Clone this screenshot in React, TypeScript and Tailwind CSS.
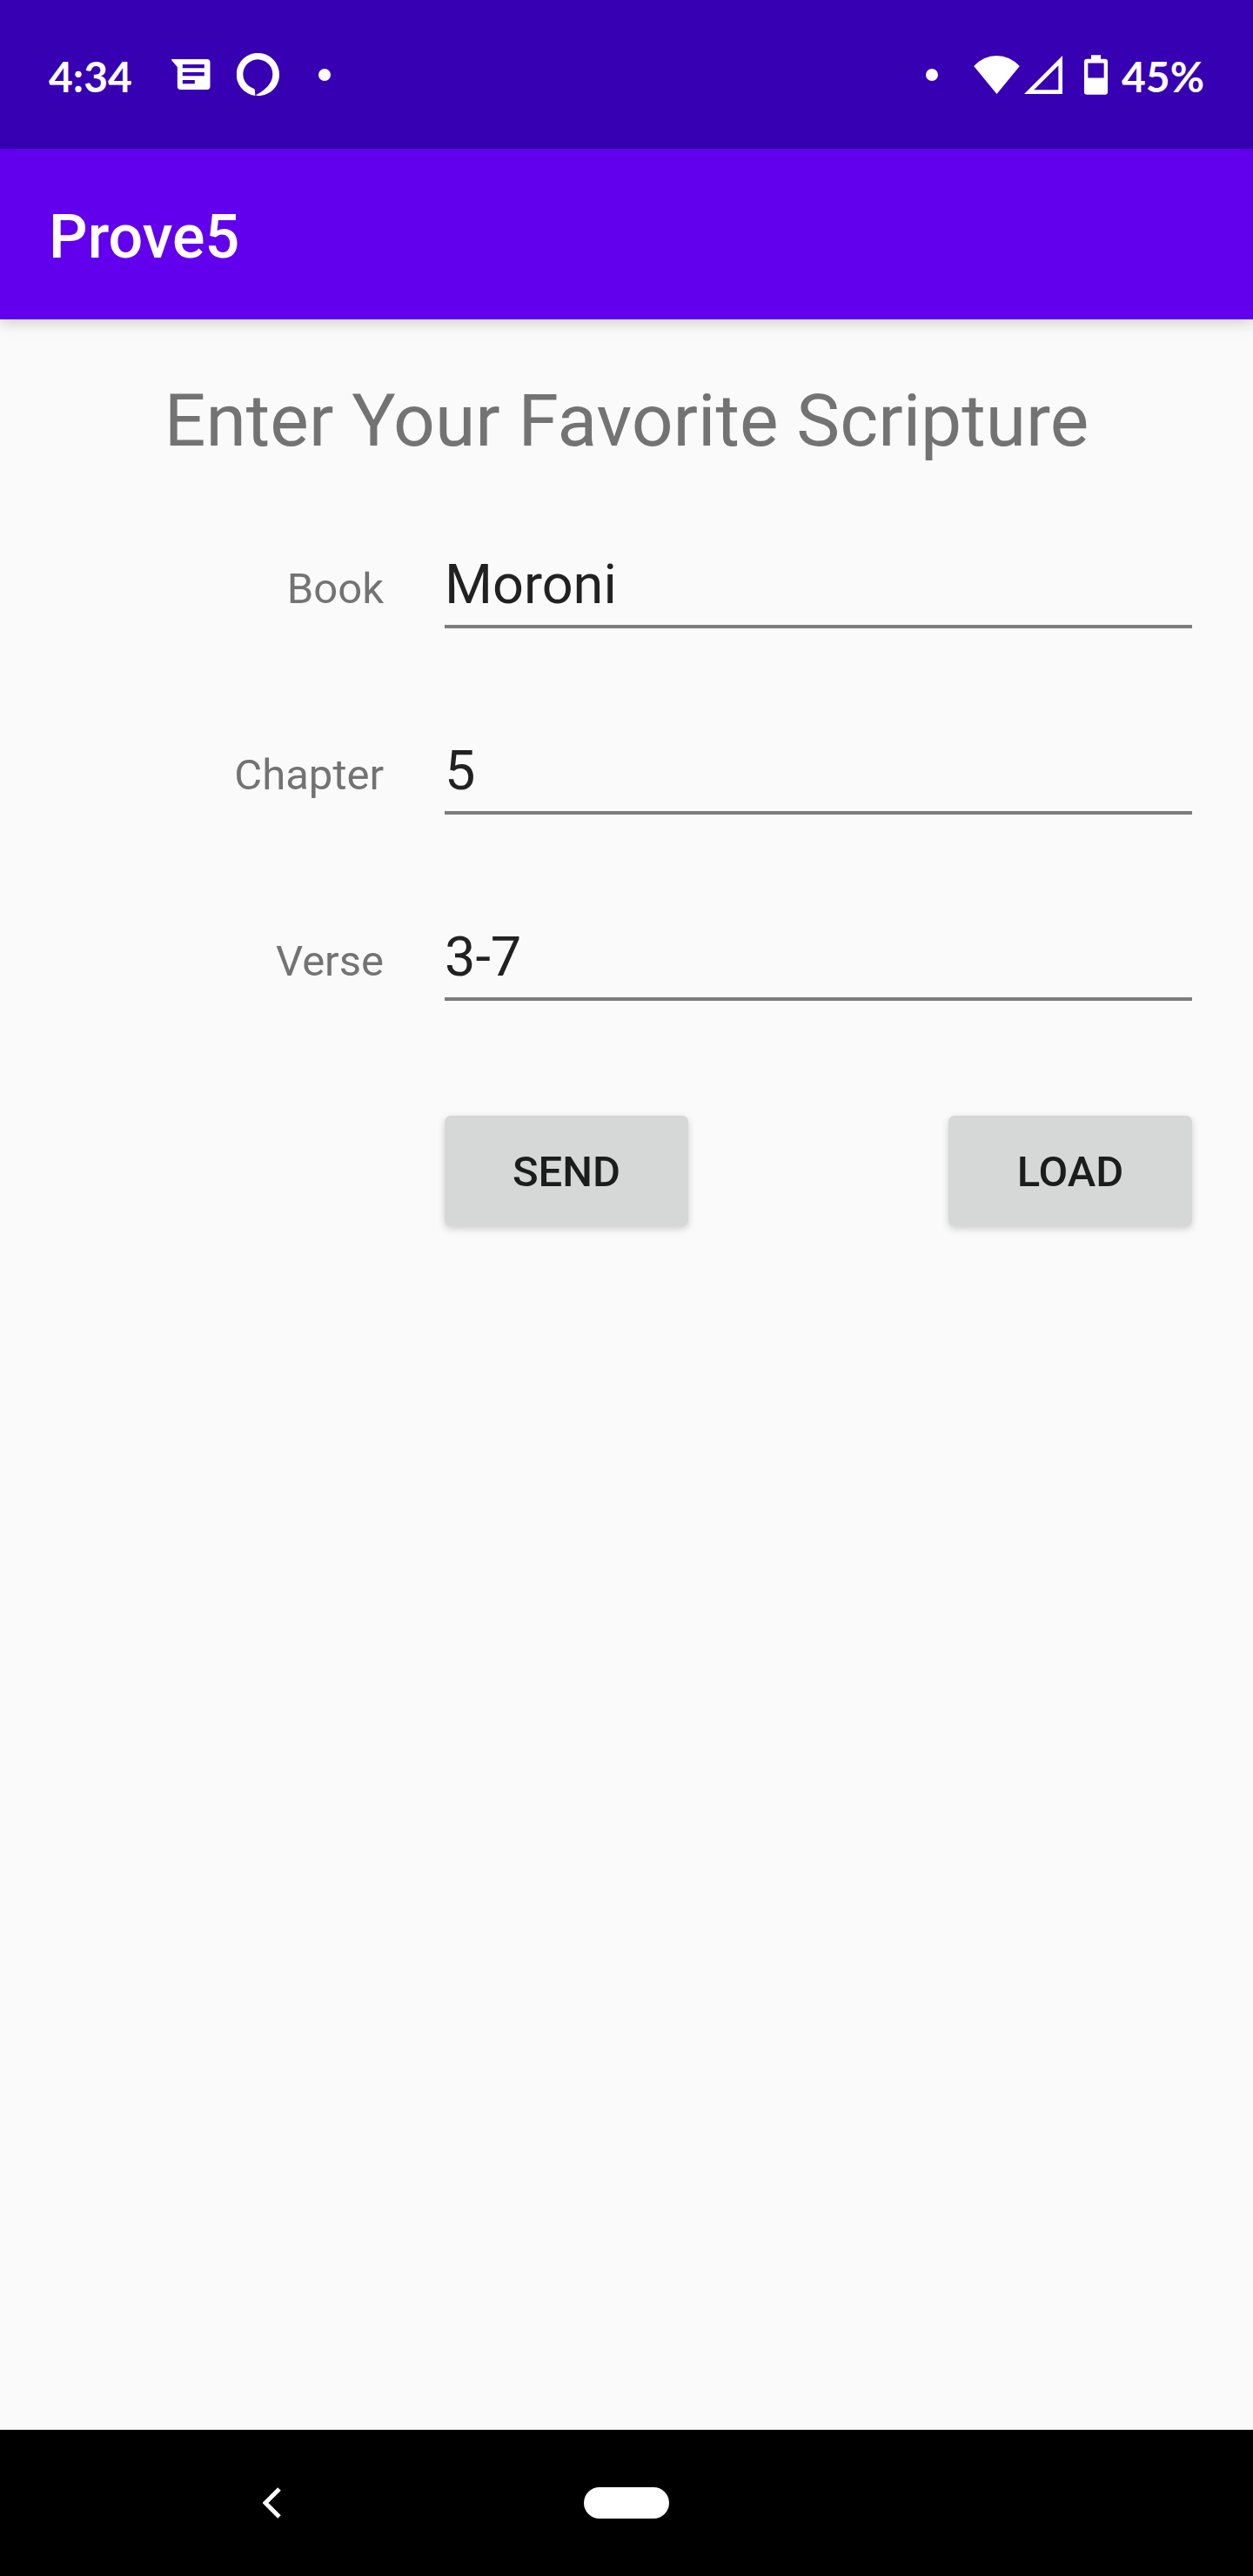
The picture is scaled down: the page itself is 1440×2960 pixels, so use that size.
import { useState } from "react";

const fieldList = [
  { id: "book", label: "Book", initial: "Moroni" },
  { id: "chapter", label: "Chapter", initial: "5" },
  { id: "verse", label: "Verse", initial: "3-7" },
];

function MessageIcon() {
  return (
    <svg viewBox="472 84 134 105" className="h-[35px] w-[45px]" fill="currentColor" aria-hidden="true">
      <path
        fillRule="evenodd"
        d="M472 84H594Q605 84 605 95V178Q605 189 594 189H503Q492 189 492 178V111L474 90Q471 86 472 84ZM510 102V115H585V102ZM510 129V142H585V129ZM510 156V169H552V156Z"
      />
    </svg>
  );
}

function AssistantIcon() {
  return (
    <svg viewBox="696 63 147 147" className="size-[49px]" fill="currentColor" aria-hidden="true">
      <path d="M760 210A74 74 0 1 1 843 137C843 176 813 210 769 210L761 208C792 193 820 169 820 136A51 51 0 1 0 752 184Q759 186 759 193Z" />
    </svg>
  );
}

function WifiIcon() {
  return (
    <svg viewBox="231 69 159 133" className="h-11 w-[53px]" fill="currentColor" aria-hidden="true">
      <path d="M231 105Q265 69 310 69T390 105L310.500 202Z" />
    </svg>
  );
}

function SignalIcon() {
  return (
    <svg viewBox="404 70 133 133" className="size-11" fill="currentColor" aria-hidden="true">
      <path fillRule="evenodd" d="M404 203L537 70V203ZM438 189H523V104Z" />
    </svg>
  );
}

function BatteryIcon() {
  return (
    <svg viewBox="612 66 81 137" className="h-[46px] w-[27px]" fill="currentColor" aria-hidden="true">
      <path
        fillRule="evenodd"
        d="M636 66H669V80H684Q693 80 693 89V194Q693 203 684 203H621Q612 203 612 194V89Q612 80 621 80H636ZM625 94V145H680V94Z"
      />
    </svg>
  );
}

function StatusBar() {
  return (
    <header className="flex h-[171px] items-center justify-between bg-[#3700b3] px-14 font-['Lato',sans-serif] text-[48px] leading-none font-bold text-white">
      <div className="flex items-center">
        <span className="w-[141px] pt-1">4:34</span>
        <MessageIcon />
        <span className="w-[30px]" />
        <AssistantIcon />
        <span className="ml-[45px] size-3.5 rounded-full bg-white" />
      </div>
      <div className="flex items-center">
        <span className="mr-[41px] size-3.5 rounded-full bg-white" />
        <WifiIcon />
        <span className="w-[5px]" />
        <SignalIcon />
        <span className="w-[25px]" />
        <BatteryIcon />
        <span className="ml-4 pt-1">45%</span>
      </div>
    </header>
  );
}

function NavigationBar() {
  return (
    <nav className="grid h-[168px] grid-cols-[1fr_auto_1fr] items-center bg-black text-white">
      <button type="button" aria-label="Back" className="ml-[45%] w-fit p-0">
        <svg viewBox="0 0 21 36" className="h-9 w-[21px]" fill="none" stroke="currentColor" strokeWidth="5" aria-hidden="true">
          <path d="M19 2L3 18L19 34" />
        </svg>
      </button>
      <button type="button" aria-label="Home" className="h-9 w-[98px] rounded-full bg-white" />
    </nav>
  );
}

export default function App() {
  const [values, setValues] = useState<Record<string, string>>(
    Object.fromEntries(fieldList.map((f) => [f.id, f.initial])),
  );
  const buttonClass =
    "h-[127px] w-[280px] rounded-[7px] bg-[#d6d8d7] pt-0.5 text-[49px] font-medium text-[#1c1c1c] shadow-[0_3px_8px_rgba(0,0,0,0.18)]";

  return (
    <div className="flex min-h-screen flex-col bg-[#fafafa] font-['Roboto',sans-serif]">
      <StatusBar />
      <div className="flex h-49 items-center bg-[#6200ee] px-14 pt-1.5 shadow-[0_4px_16px_rgba(0,0,0,0.18)]">
        <h1 className="text-[70px] leading-20 font-medium text-white">Prove5</h1>
      </div>
      <main className="flex-1 pt-[67px] pr-[70px]">
        <h2 className="-mr-[70px] text-center text-[84px] leading-[100px] text-[#737373]">
          Enter Your Favorite Scripture
        </h2>
        <form className="mt-[98px]" onSubmit={(e) => e.preventDefault()}>
          <div className="flex flex-col gap-31">
            {fieldList.map((f) => (
              <div key={f.id} className="grid grid-cols-[441px_1fr] items-baseline gap-x-[70px]">
                <label htmlFor={f.id} className="text-right text-[49px] leading-14 text-[#737373]">
                  {f.label}
                </label>
                <input
                  id={f.id}
                  type="text"
                  value={values[f.id]}
                  onChange={(e) => setValues({ ...values, [f.id]: e.target.value })}
                  className="h-[90px] w-full border-b-4 border-[#7c7c7c] pb-2 text-[63px] leading-[76px] text-[#212121] outline-none"
                />
              </div>
            ))}
          </div>
          <div className="mt-33 ml-[511px] flex justify-between">
            <button type="submit" className={buttonClass}>
              SEND
            </button>
            <button type="button" className={buttonClass}>
              LOAD
            </button>
          </div>
        </form>
      </main>
      <NavigationBar />
    </div>
  );
}
